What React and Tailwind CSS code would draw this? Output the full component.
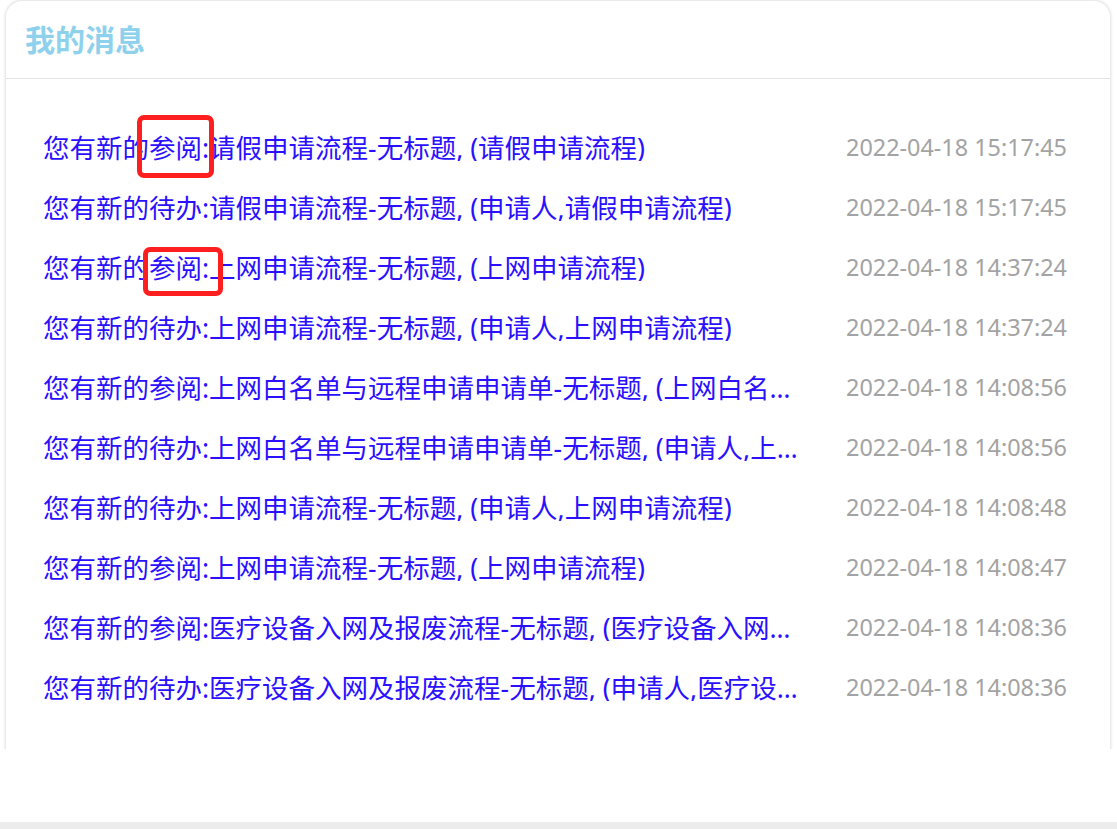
import React from 'react';

const MESSAGES = [
    { text: '您有新的参阅:请假申请流程-无标题, (请假申请流程)', time: '2022-04-18 15:17:45' },
    { text: '您有新的待办:请假申请流程-无标题, (申请人,请假申请流程)', time: '2022-04-18 15:17:45' },
    { text: '您有新的参阅:上网申请流程-无标题, (上网申请流程)', time: '2022-04-18 14:37:24' },
    { text: '您有新的待办:上网申请流程-无标题, (申请人,上网申请流程)', time: '2022-04-18 14:37:24' },
    { text: '您有新的参阅:上网白名单与远程申请申请单-无标题, (上网白名单与远程申请申请单)', time: '2022-04-18 14:08:56' },
    { text: '您有新的待办:上网白名单与远程申请申请单-无标题, (申请人,上网白名单与远程申请申请单)', time: '2022-04-18 14:08:56' },
    { text: '您有新的待办:上网申请流程-无标题, (申请人,上网申请流程)', time: '2022-04-18 14:08:48' },
    { text: '您有新的参阅:上网申请流程-无标题, (上网申请流程)', time: '2022-04-18 14:08:47' },
    { text: '您有新的参阅:医疗设备入网及报废流程-无标题, (医疗设备入网及报废流程)', time: '2022-04-18 14:08:36' },
    { text: '您有新的待办:医疗设备入网及报废流程-无标题, (申请人,医疗设备入网及报废流程)', time: '2022-04-18 14:08:36' },
];

const font = { fontFamily: '"Noto Sans", "Noto Sans CJK SC", sans-serif' };

export default function App() {
    return (
        <div className="h-[829px] w-[1117px] bg-white flex flex-col overflow-hidden" style={font}>
            <div className="flex-1">
                <div className="h-[749px] overflow-hidden pt-[1px] pl-[6px] pr-[7px]">
                    <div className="relative h-[790px] rounded-[16px] bg-white shadow-[0_0_3px_1px_rgba(0,0,0,0.13)]">
                        <div className="h-[78px] border-b border-[#e3e3e3] flex items-center pl-[19px]">
                            <h2 className="text-[30px] font-bold text-[#8ed1ec] leading-none">我的消息</h2>
                        </div>

                        <div className="pt-[39px] pl-[37px] pr-[43px]">
                            {MESSAGES.map((m, i) => (
                                <div key={i} className="h-[60px] flex items-center">
                                    <span className="w-[756px] truncate text-[26.5px] text-[#2a10ff] leading-none">{m.text}</span>
                                    <span className="ml-auto text-[23.4px] text-[#a3a3a3] leading-none whitespace-nowrap">{m.time}</span>
                                </div>
                            ))}
                        </div>

                        {/* annotation boxes */}
                        <div className="absolute left-[131px] top-[114px] w-[77px] h-[63px] border-[5px] border-[#ff1f1f] rounded-[7px]"></div>
                        <div className="absolute left-[137px] top-[246px] w-[80px] h-[49px] border-[5px] border-[#ff1f1f] rounded-[7px]"></div>
                    </div>
                </div>
            </div>
            <div className="h-[7px] bg-[#ececec]"></div>
        </div>
    );
}
